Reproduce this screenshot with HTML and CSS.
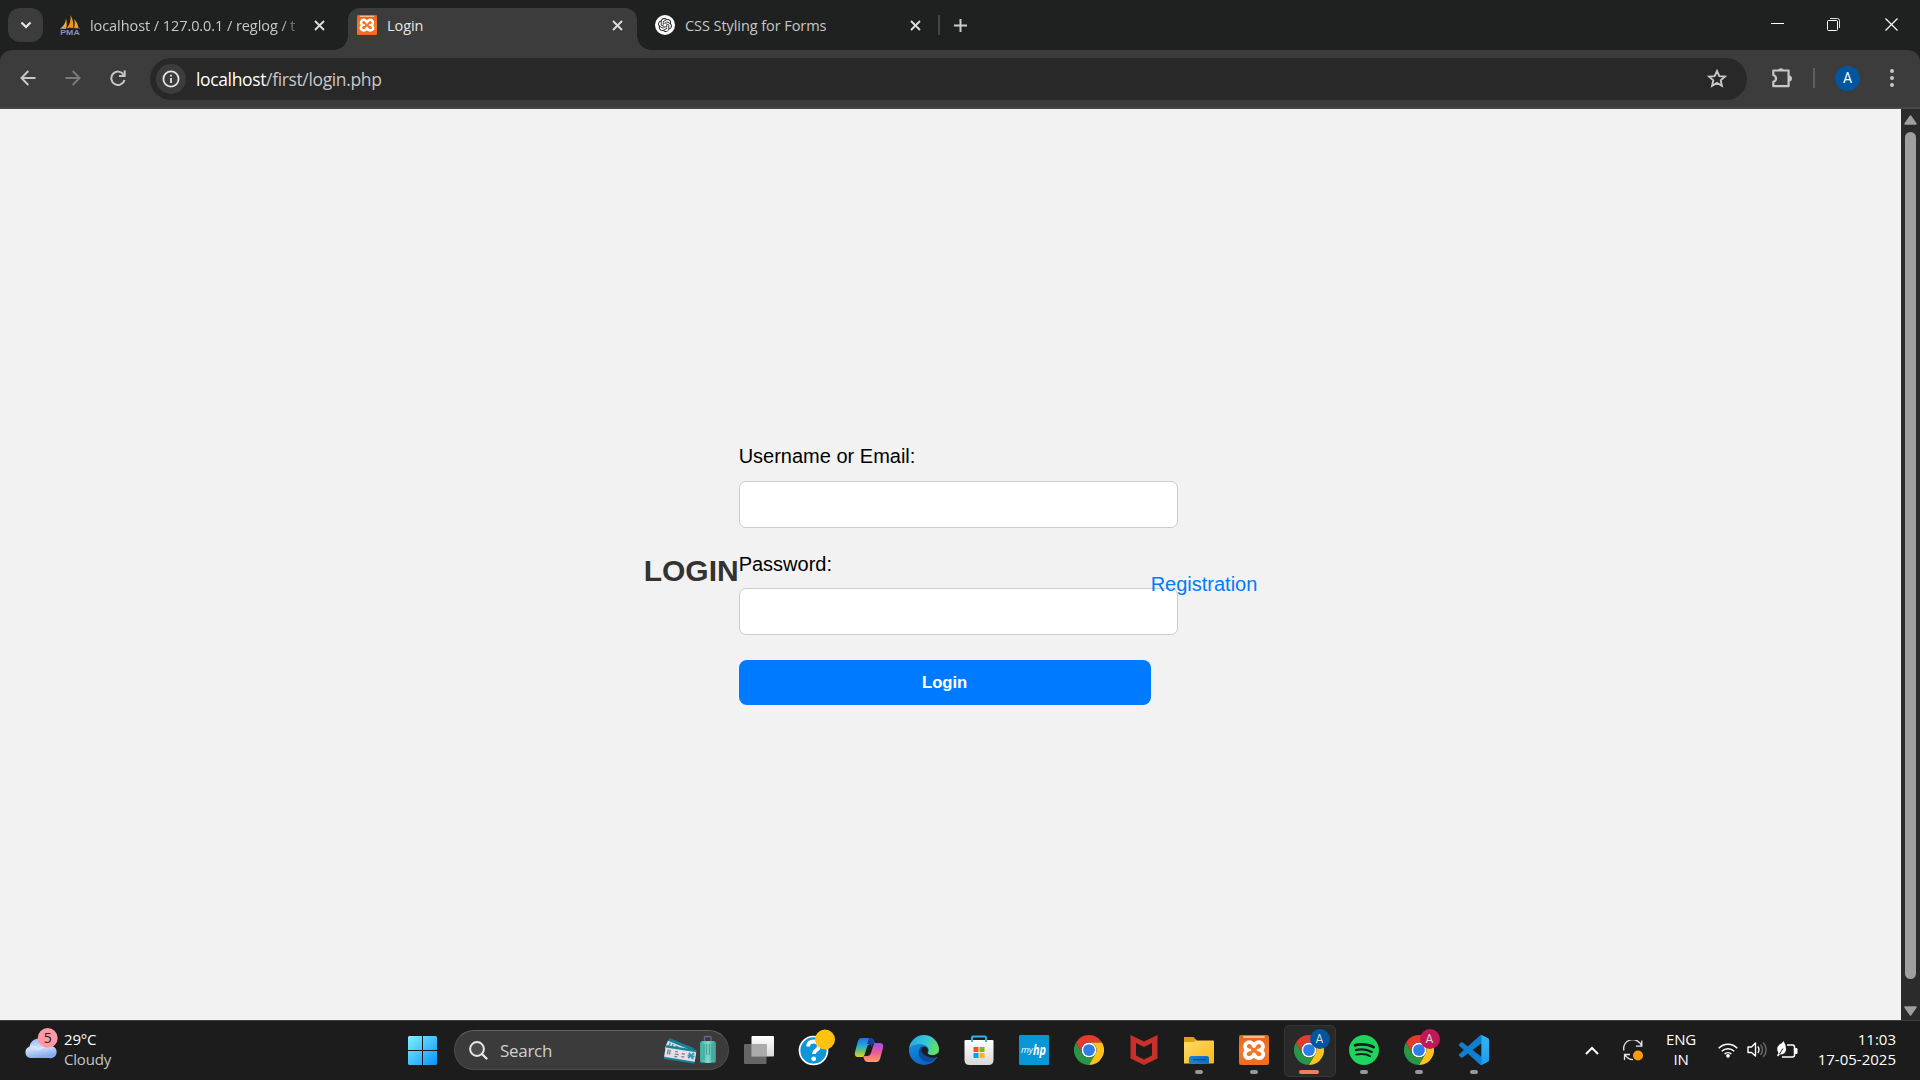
FILE: index.html
```html
<!DOCTYPE html>
<html lang="en">
<head>
<meta charset="utf-8">
<title>Login</title>
<link rel="stylesheet" href="styles.css">
</head>
<body>
<svg class="defs" width="0" height="0" aria-hidden="true">
  <defs>
    <linearGradient id="win" x1="0" y1="0" x2="1" y2="1"><stop offset="0" stop-color="#7df3ff"/><stop offset="1" stop-color="#0a90fa"/></linearGradient>
    <linearGradient id="folder" x1="0" y1="0" x2="1" y2="1"><stop offset="0" stop-color="#ffdc6b"/><stop offset="1" stop-color="#fbb615"/></linearGradient>
    <linearGradient id="bluebar" x1="0" y1="0" x2="1" y2="0"><stop offset="0" stop-color="#1388dc"/><stop offset="1" stop-color="#0c6cc0"/></linearGradient>
    <linearGradient id="cloud" x1="0" y1="0" x2="0.3" y2="1"><stop offset="0" stop-color="#8fb4f0"/><stop offset=".55" stop-color="#cfe0fb"/><stop offset="1" stop-color="#86aaea"/></linearGradient>
    <linearGradient id="sail" x1="0" y1="0" x2="1" y2="0"><stop offset="0" stop-color="#fbc888"/><stop offset=".5" stop-color="#f4900c"/><stop offset="1" stop-color="#f9a63a"/></linearGradient>
    <linearGradient id="xampp-bg" x1="0" y1="0" x2="0" y2="1"><stop offset="0" stop-color="#e0641c"/><stop offset=".5" stop-color="#f47a28"/><stop offset="1" stop-color="#ee6a20"/></linearGradient>
    <linearGradient id="edge-top" x1="0" y1=".3" x2="1" y2=".6"><stop offset="0" stop-color="#2aa8e0"/><stop offset=".5" stop-color="#33c6d6"/><stop offset="1" stop-color="#6be253"/></linearGradient>
    <linearGradient id="edge-left" x1="0" y1="0" x2=".4" y2="1"><stop offset="0" stop-color="#1b9de2"/><stop offset="1" stop-color="#0a66c8"/></linearGradient>
    <linearGradient id="cop-l" x1="0" y1="0" x2="0" y2="1"><stop offset="0" stop-color="#2270e0"/><stop offset=".4" stop-color="#22a8dc"/><stop offset=".7" stop-color="#6cc46a"/><stop offset="1" stop-color="#f0d020"/></linearGradient>
    <linearGradient id="cop-r" x1="0" y1="0" x2="0" y2="1"><stop offset="0" stop-color="#a04cf0"/><stop offset=".5" stop-color="#ee5a9a"/><stop offset="1" stop-color="#ffa060"/></linearGradient>
    <linearGradient id="bag" x1="0" y1="0" x2="0" y2="1"><stop offset="0" stop-color="#ffffff"/><stop offset="1" stop-color="#d8d8d8"/></linearGradient>
    <linearGradient id="case" x1="0" y1="0" x2="1" y2="0"><stop offset="0" stop-color="#3fa79c"/><stop offset=".5" stop-color="#7fdccb"/><stop offset="1" stop-color="#2f9a92"/></linearGradient>
    <linearGradient id="code" x1="0" y1="0" x2="0" y2="1"><stop offset="0" stop-color="#32b5f5"/><stop offset="1" stop-color="#1f9cf0"/></linearGradient>
    <symbol id="chrome" viewBox="0 0 48 48">
      <circle cx="24" cy="24" r="12" fill="#fff"/>
      <path fill="#e33b2e" d="M24 12H44.784A23.994 23.994 0 0 0 3.2155 12.003L13.608 30.003A11.985 11.985 0 0 1 24 12Z"/>
      <path fill="#2a9447" d="M13.608 30.003L3.2156 12.002A23.994 23.994 0 0 0 24.0025 48L34.395 30.003A11.985 11.985 0 0 1 13.608 30.003Z"/>
      <path fill="#fcc31e" d="M34.395 30.003L24.0025 48A23.994 23.994 0 0 0 44.7858 12.003H24A11.985 11.985 0 0 1 34.395 30.003Z"/>
      <circle cx="24" cy="24" r="9.4" fill="#2f7de9"/>
    </symbol>
    <symbol id="xampp" viewBox="0 0 30 30">
      <rect width="30" height="30" rx="2" fill="url(#xampp-bg)"/>
      <rect x="4" y="1" width="22" height="2" rx="1" fill="#f9b78c"/>
      <path fill="none" stroke="#fff" stroke-width="3.8" stroke-linejoin="round" d="M15 11C13.500 7 9.500 6.300 7.300 8.300C5.200 10.400 5.500 13.400 8.500 15C5.200 16.800 5 20.200 7 22C9.300 24 13.500 23.200 15 19.500C16.500 23.200 20.700 24 23 22C25 20.200 24.800 16.800 21.500 15C24.500 13.400 24.800 10.400 22.700 8.300C20.500 6.300 16.500 7 15 11Z"/>
      <path stroke="#fff" stroke-width="2.600" stroke-linecap="round" d="M8.500 15h2.500M19 15h2.500"/>
    </symbol>
    <symbol id="x" viewBox="0 0 11 11"><path d="M1 1L10 10M10 1L1 10" fill="none" stroke="currentColor" stroke-width="1.9"/></symbol>
  </defs>
</svg>

<header class="tabstrip">
  <button class="tab-search"><svg width="12" height="8" viewBox="0 0 12 8"><path d="M1.500 1.500L6 6L10.500 1.500" fill="none" stroke="#e8e8e8" stroke-width="2.200"/></svg></button>
  <div class="tab tab-first">
    <svg class="sails" width="20" height="20" viewBox="0 0 20 20"><path fill="url(#sail)" d="M0 14C4 11 6 7 6 3C7 8 7 11 6 14ZM7 13C10 9 11 5 10.500 0C13 5 14 9 13 13ZM14 13C15 9 15 7 14 4C17 7 18 10 18.500 13Z"/><path d="M0 13.700Q10 11.500 20 13.500" fill="none" stroke="#6a6d96" stroke-width=".7"/><text class="pma" x=".3" y="19.600" textLength="19.400" lengthAdjust="spacingAndGlyphs">PMA</text></svg>
    <span class="tab-title fade">localhost / 127.0.0.1 / reglog / t</span>
    <svg class="close" width="11" height="11"><use href="#x"/></svg>
  </div>
  <div class="tab active">
    <svg width="20" height="20"><use href="#xampp"/></svg>
    <span class="tab-title">Login</span>
    <svg class="close" width="11" height="11"><use href="#x"/></svg>
  </div>
  <div class="tab tab-last">
    <svg width="20" height="20" viewBox="0 0 20 20"><circle cx="10" cy="10" r="10" fill="#fff"/><path transform="translate(3 3) scale(.583)" fill="#222" d="M22.2819 9.8211a5.9847 5.9847 0 0 0-.5157-4.9108 6.0462 6.0462 0 0 0-6.5098-2.9A6.0651 6.0651 0 0 0 4.9807 4.1818a5.9847 5.9847 0 0 0-3.9977 2.9 6.0462 6.0462 0 0 0 .7427 7.0966 5.98 5.98 0 0 0 .511 4.9107 6.051 6.051 0 0 0 6.5146 2.9001A5.9847 5.9847 0 0 0 13.2599 24a6.0557 6.0557 0 0 0 5.7718-4.2058 5.9894 5.9894 0 0 0 3.9977-2.9001 6.0557 6.0557 0 0 0-.7475-7.0729zm-9.022 12.6081a4.4755 4.4755 0 0 1-2.8764-1.0408l.1419-.0804 4.7783-2.7582a.7948.7948 0 0 0 .3927-.6813v-6.7369l2.02 1.1686a.071.071 0 0 1 .038.052v5.5826a4.504 4.504 0 0 1-4.4945 4.4944zm-9.6607-4.1254a4.4708 4.4708 0 0 1-.5346-3.0137l.142.0852 4.783 2.7582a.7712.7712 0 0 0 .7806 0l5.8428-3.3685v2.3324a.0804.0804 0 0 1-.0332.0615L9.74 19.9502a4.4992 4.4992 0 0 1-6.1408-1.6464zM2.3408 7.8956a4.485 4.485 0 0 1 2.3655-1.9728V11.6a.7664.7664 0 0 0 .3879.6765l5.8144 3.3543-2.0201 1.1685a.0757.0757 0 0 1-.071 0l-4.8303-2.7865A4.504 4.504 0 0 1 2.3408 7.872zm16.5963 3.8558L13.1038 8.364 15.1192 7.2a.0757.0757 0 0 1 .071 0l4.8303 2.7913a4.4944 4.4944 0 0 1-.6765 8.1042v-5.6772a.79.79 0 0 0-.407-.667zm2.0107-3.0231l-.142-.0852-4.7735-2.7818a.7759.7759 0 0 0-.7854 0L9.409 9.2297V6.8974a.0662.0662 0 0 1 .0284-.0615l4.8303-2.7866a4.4992 4.4992 0 0 1 6.6802 4.66zM8.3065 12.863l-2.02-1.1638a.0804.0804 0 0 1-.038-.0567V6.0742a4.4992 4.4992 0 0 1 7.3757-3.4537l-.142.0805L8.704 5.459a.7948.7948 0 0 0-.3927.6813zm1.0976-2.3654l2.602-1.4998 2.6069 1.4998v2.9994l-2.5974 1.4997-2.6067-1.4997Z"/></svg>
    <span class="tab-title title-css">CSS Styling for Forms</span>
    <svg class="close" width="11" height="11"><use href="#x"/></svg>
  </div>
  <span class="tab-divider"></span>
  <svg class="new-tab" width="13" height="13" viewBox="0 0 13 13"><path d="M6.500 0V13M0 6.500H13" stroke="#ccc" stroke-width="2"/></svg>
  <div class="window-controls">
    <svg width="13" height="13" viewBox="0 0 13 13"><path d="M0 5.500H13" stroke="#fff"/></svg>
    <svg width="13" height="13" viewBox="0 0 13 13"><rect x=".5" y="2.500" width="10" height="10" rx="1" fill="none" stroke="#fff"/><path d="M3 .5H10.500Q12.500 .5 12.500 2.500V10" fill="none" stroke="#ddd"/></svg>
    <svg width="13" height="13" viewBox="0 0 13 13"><path d="M.5 .5L12.500 12.500M12.500 .5L.5 12.500" stroke="#fff" stroke-width="1.200"/></svg>
  </div>
</header>

<nav class="toolbar-back"><div class="toolbar">
  <div class="nav-buttons">
    <svg width="16" height="16" viewBox="0 0 16 16"><path d="M15.500 8H1.800M8.300 1L1.500 8L8.300 15" fill="none" stroke="#c7c7c7" stroke-width="2"/></svg>
    <svg width="16" height="16" viewBox="0 0 16 16"><path d="M.5 8H14.200M7.700 1L14.500 8L7.700 15" fill="none" stroke="#7b7b7b" stroke-width="2"/></svg>
    <svg width="16" height="16" viewBox="0 0 16 16"><path d="M13.600 4.600A6.700 6.700 0 1 0 14.500 10" fill="none" stroke="#c7c7c7" stroke-width="2"/><path d="M14.700 .4V6H9" fill="none" stroke="#c7c7c7" stroke-width="2"/></svg>
  </div>
  <div class="omnibox">
    <span class="site-info"><svg width="18" height="18" viewBox="0 0 18 18"><circle cx="9" cy="9" r="7.600" fill="none" stroke="#e3e3e3" stroke-width="1.800"/><path d="M9 8V13M9 4.800V6.600" stroke="#e3e3e3" stroke-width="1.800"/></svg></span>
    <span class="url"><b>localhost</b>/first/login.php</span>
    <svg class="star" width="20" height="19" viewBox="0 0 20 19"><path d="M10 2L12.300 7.100L17.900 7.600L13.700 11.300L14.900 16.800L10 13.900L5.100 16.800L6.300 11.300L2.100 7.600L7.700 7.100Z" fill="none" stroke="#c7c7c7" stroke-width="1.900"/></svg>
  </div>
  <svg class="puzzle" width="22" height="22" viewBox="0 0 22 22"><path d="M2.300 3.500H17.600V19.200H2.300V14.800Q5 14 5 11.400Q5 8.900 2.300 8Z" fill="none" stroke="#c7c7c7" stroke-width="2.200" stroke-linejoin="round"/><path d="M7 3.500A3 3 0 0 1 12.800 3.500ZM18 8.500A3 3 0 0 1 18 14.500Z" fill="#c7c7c7"/></svg>
  <span class="toolbar-divider"></span>
  <span class="avatar">A</span>
  <svg class="menu" width="4" height="18" viewBox="0 0 4 18"><g fill="#c7c7c7"><circle cx="2" cy="2" r="2"/><circle cx="2" cy="9" r="2"/><circle cx="2" cy="16" r="2"/></g></svg>
</div></nav>

<div class="viewport">
  <main class="page">
    <h2>LOGIN</h2>
    <form>
      <label for="user">Username or Email:</label>
      <input type="text" id="user">
      <label for="pass">Password:</label>
      <input type="password" id="pass">
      <button type="button" class="submit">Login</button>
    </form>
    <p class="register"><a href="#">Registration</a></p>
  </main>
  <div class="scrollbar">
    <svg width="13" height="10" viewBox="0 0 13 10"><path d="M6.500 1.300L11.700 8.800H1.300Z" fill="#9f9f9f" stroke="#9f9f9f" stroke-width="2" stroke-linejoin="round"/></svg>
    <span class="thumb"></span>
    <svg width="13" height="10" viewBox="0 0 13 10"><path d="M6.500 8.700L11.700 1.200H1.300Z" fill="#9f9f9f" stroke="#9f9f9f" stroke-width="2" stroke-linejoin="round"/></svg>
  </div>
</div>

<footer class="taskbar">
  <div class="weather">
    <svg width="35" height="32" viewBox="0 0 35 32"><path fill="url(#cloud)" d="M6 30A6 6 0 0 1 5.500 18.500A10 10 0 0 1 23 14Q26 16 28 18A6 6 0 0 1 25 30Z"/><path d="M6 18.500Q11 17 14 22M14 22Q20 17 27 20" fill="none" stroke="#e8f0ff" stroke-width="1.200" opacity=".7"/><circle cx="23.700" cy="10" r="10" fill="#ff99a4"/><text class="badge-text" x="23.700" y="15.200" text-anchor="middle">5</text></svg>
    <div class="two-line"><span>29°C</span><span class="dim">Cloudy</span></div>
  </div>
  <svg class="start" width="29" height="29" viewBox="0 0 29 29"><path fill="url(#win)" d="M1 0H14V14H0V1ZM15 0H28L29 1V14H15ZM0 15H14V29H1L0 28ZM15 15H29V28L28 29H15Z"/></svg>
  <div class="search">
    <svg width="19" height="19" viewBox="0 0 19 19"><circle cx="8" cy="8" r="6.900" fill="#4b4b4b" stroke="#e6e6e6" stroke-width="2"/><path d="M13 13L17.500 17.500" stroke="#e6e6e6" stroke-width="2.400" stroke-linecap="round"/></svg>
    <span>Search</span>
    <svg class="travel" width="53" height="30" viewBox="0 0 53 30"><g transform="translate(5 3) rotate(22)"><rect width="27" height="12" rx="1" fill="#1a7f94"/><rect y="3" width="26" height="8" fill="#cfe0e6"/><path d="M3 4v5M6 4v4M9 5h3M9 7h6" stroke="#65788c" stroke-width="1.200"/></g><g transform="translate(2 10) rotate(9)"><rect width="31" height="14" rx="1" fill="#14849a"/><rect y="2.500" width="31" height="9.500" fill="#e6dfe4"/><path d="M3 4v5M5 4v5M10 5h3M10 7.500h4M10 10h3M17 6h3M17 9h3" stroke="#77718f" stroke-width="1.200"/><path d="M24 4l5 6M29 3.500l-5 6M23 7h7" stroke="#3a96b8" stroke-width="1.800"/></g><path d="M40.500 6V2.500Q40.500 1.500 42 1.500H45.500Q47 1.500 47 2.500V6" fill="none" stroke="#69688f" stroke-width="1.300"/><rect x="36" y="6" width="16" height="22" rx="2.500" fill="url(#case)"/><path d="M40 9V25M42.700 9V20M45.300 9V20M48 9V25" stroke="#2f8f88" stroke-width=".8"/><path d="M38 28h3M47 28h3" stroke="#347" stroke-width="1"/></svg>
  </div>
  <div class="apps">
    <span class="app"><svg width="30" height="30" viewBox="0 0 30 30"><rect x="7.500" y="1" width="22.500" height="20.500" rx="1" fill="url(#bag)"/><rect y="9" width="22.500" height="20" rx="1" fill="#737373" opacity=".85"/><rect x="7.500" y="9" width="15" height="12.500" fill="#aaa"/></svg></span>
    <span class="app"><svg class="wide" width="38" height="38" viewBox="0 0 38 38"><circle cx="18.500" cy="20.500" r="14" fill="#0f96d8" stroke="#fff" stroke-width="1.700"/><path d="M13 16.500Q13.500 11.500 18.500 11.500T24 16Q24 18.500 21 20.500Q18.800 22 18.800 24" fill="none" stroke="#fff" stroke-width="3.800"/><circle cx="18.700" cy="28.800" r="2.400" fill="#fff"/><circle cx="30" cy="9.500" r="10" fill="#ffc20e"/></svg></span>
    <span class="app"><svg width="30" height="30" viewBox="0 0 30 30"><path fill="url(#cop-l)" d="M7 3H16Q19 3 20 6L21 9H17Q14 9 13 12L10.500 20Q9.800 22 8 22H4Q0 22 1 17L4 6Q5 3 7 3Z"/><path fill="url(#cop-r)" d="M23 27H14Q11 27 10 24L9 21H13Q16 21 17 18L19.500 10Q20.200 8 22 8H26Q30 8 29 13L26 24Q25 27 23 27Z"/><path fill="#173f9e" d="M15 3H16.500Q19 3 20 6L20.600 8Q18 9 17 12L16.500 9H13Z"/></svg></span>
    <span class="app"><svg width="30" height="30" viewBox="0 0 30 30"><circle cx="15" cy="15" r="15" fill="url(#edge-left)"/><path fill="#0c4a9a" d="M11.500 12Q8 17 11 22.500Q15 28.500 23 26Q26 24.500 28 21Q24 23 20 21.500Q15.500 20 15 15Q15 11 12 11.500Z"/><path fill="url(#edge-top)" d="M.2 13A15 15 0 0 1 30 14.500Q29.500 20 23.500 20.200Q19 20.200 18.500 18Q21 16 19 12.500Q16 9 11 9Q4 9 .2 13Z"/><path fill="#1c1c1c" d="M15.300 11.300Q20.500 13 18.500 17.500Q18.800 20.400 24.500 20.200Q27 20 29 18L30.500 19V22H27.500Q24 23.400 20 22Q14 20 12.500 16Q12 12.500 15.300 11.300Z"/></svg></span>
    <span class="app"><svg width="30" height="30" viewBox="0 0 30 30"><path d="M8 6V2.500Q8 1.500 9 1.500H21Q22 1.500 22 2.500V6" fill="none" stroke="#2fb4ea" stroke-width="1.900"/><path fill="url(#bag)" d="M.5 6Q.5 5 1.500 5H28.500Q29.500 5 29.500 6V25Q29.500 30 24.500 30H5.500Q.5 30 .5 25Z"/><path d="M8 5V7M22 5V7" stroke="#2fb4ea" stroke-width="1.900"/><path fill="#f1511b" d="M9.500 12h5v5h-5z"/><path fill="#80bb0a" d="M15.500 12h5v5h-5z"/><path fill="#00a1f1" d="M9.500 18h5v5h-5z"/><path fill="#fbb900" d="M15.500 18h5v5h-5z"/></svg></span>
    <span class="app"><svg width="30" height="30" viewBox="0 0 30 30"><rect width="30" height="30" rx="1" fill="#0796d6"/><text class="my" x="2" y="18" textLength="12" lengthAdjust="spacingAndGlyphs">my</text><text class="hp" x="14" y="19.500" textLength="13" lengthAdjust="spacingAndGlyphs">hp</text></svg></span>
    <span class="app"><svg width="30" height="30"><use href="#chrome"/></svg></span>
    <span class="app"><svg width="30" height="30" viewBox="0 0 30 30"><path fill="#c8302c" d="M1.500 0L15 6.500L28.500 0V23.500L15 30L1.500 23.500ZM7 8V20.500L15 24.500L23 20.500V8L15 12Z"/></svg></span>
    <span class="app running"><svg width="30" height="30" viewBox="0 0 30 30"><path fill="#e0a106" d="M0 2H9.500L13 5.500L10 9H0Z"/><path fill="url(#folder)" d="M0 7H9Q10.500 7 11.500 5.500H29Q30 5.500 30 6.500V27.500Q30 28.500 29 28.500H0Z"/><path fill="url(#bluebar)" d="M5 28.500V23.500Q5 21 7.500 21H22.500Q25 21 25 23.500V28.500Z"/><path d="M9 24.600H21.500" stroke="#0b4a91" stroke-width="1.300"/></svg></span>
    <span class="app running"><svg width="30" height="30"><use href="#xampp"/></svg></span>
    <span class="app current"><svg width="30" height="30"><use href="#chrome"/></svg><span class="profile blue">A</span></span>
    <span class="app running"><svg width="30" height="30" viewBox="0 0 24 24"><path fill="#1ed35e" d="M12 0C5.400 0 0 5.400 0 12s5.400 12 12 12 12-5.400 12-12S18.660 0 12 0zm5.521 17.340c-.24.359-.66.48-1.021.24-2.820-1.740-6.360-2.101-10.561-1.141-.418.122-.779-.179-.899-.539-.12-.421.18-.78.54-.9 4.560-1.021 8.520-.6 11.640 1.320.42.18.479.659.301 1.020zm1.440-3.300c-.301.42-.841.6-1.262.3-3.239-1.980-8.159-2.580-11.939-1.380-.479.12-1.020-.12-1.140-.6-.12-.48.12-1.021.6-1.141C9.600 9.900 15 10.561 18.720 12.840c.361.181.54.78.241 1.200zm.12-3.360C15.240 8.400 8.820 8.160 5.160 9.301c-.6.179-1.200-.181-1.380-.721-.18-.601.18-1.200.72-1.381 4.260-1.260 11.280-1.020 15.721 1.621.539.3.719 1.020.419 1.560-.299.421-1.020.599-1.559.3z"/></svg></span>
    <span class="app running"><svg width="30" height="30"><use href="#chrome"/></svg><span class="profile pink">A</span></span>
    <span class="app running"><svg width="30" height="30" viewBox="0 0 24 24"><path fill="#0e80cf" d="M23.150 2.587L18.210.21a1.494 1.494 0 0 0-1.705.29l-9.460 8.630-4.120-3.128a.999.999 0 0 0-1.276.057L.327 7.261A1 1 0 0 0 .326 8.740L3.899 12 .326 15.260a1 1 0 0 0 .001 1.479L1.650 17.940a.999.999 0 0 0 1.276.057l4.120-3.128 9.460 8.630a1.492 1.492 0 0 0 1.704.29l4.942-2.377A1.500 1.500 0 0 0 24 20.060V3.939a1.500 1.500 0 0 0-.85-1.352zm-5.146 14.861L10.826 12l7.178-5.448v10.896z"/><path fill="url(#code)" d="M18 1.200Q18 .3 17.300 0L18.200.2L23.150 2.587Q24 3 24 3.940V20.060Q24 21 23.150 21.400L18.200 23.800L17.300 24Q18 23.600 18 22.800Z"/></svg></span>
  </div>
  <div class="tray">
    <svg width="14" height="9" viewBox="0 0 14 9"><path d="M1 8L7 2L13 8" fill="none" stroke="#fff" stroke-width="2"/></svg>
    <svg class="sync" width="21" height="21" viewBox="0 0 21 21"><path d="M1 10.500A9 8.500 0 0 1 18.500 6M18.800 .5V6.200H13M10 19.700Q5 19.500 2 14.800M1.500 20V14.500H7" fill="none" stroke="#e6e6e6" stroke-width="1.300"/><circle cx="15" cy="15.500" r="5" fill="#ff9a0c"/></svg>
    <div class="two-line lang"><span>ENG</span><span>IN</span></div>
    <svg class="wifi" width="20" height="16" viewBox="0 0 20 16"><g fill="none" stroke="#fff" stroke-width="1.500"><path d="M.7 6.300A12.600 12.600 0 0 1 19.300 6.300"/><path d="M3.800 9.300A8.600 8.600 0 0 1 16.200 9.300"/><path d="M6.600 12A5 5 0 0 1 13.400 12"/></g><circle cx="10" cy="13.800" r="1.900" fill="#fff"/></svg>
    <svg class="speaker" width="21" height="18" viewBox="0 0 21 18"><path d="M1 6H4.500L8.500 2V15L4.500 11.500H1Z" fill="none" stroke="#fff" stroke-width="1.400" stroke-linejoin="round"/><path d="M10.800 5.500Q13.300 8.800 10.800 12" fill="none" stroke="#fff" stroke-width="1.300"/><path d="M13.500 3.500Q17.500 8.800 13.500 14M16.300 1.500Q22 8.800 16.300 16" fill="none" stroke="#686868" stroke-width="1.400"/></svg>
    <svg class="battery" width="21" height="18" viewBox="0 0 21 18"><path d="M10 4H15.500Q17.500 4 17.500 6V14Q17.500 16 15.500 16H5" fill="none" stroke="#fff" stroke-width="1.500"/><path d="M18.500 7.500H20V12.500H18.500Z" fill="#fff" stroke="#fff"/><path fill="#fff" d="M6.500 0Q5.500 2 2.500 3.500Q-1.500 7 1.500 12L0 14.500L1 15.500L3 13.300Q8 14 9 9Q9.300 4 6.500 0Z"/><path d="M2.500 13L6 7.500" stroke="#1c1c1c"/></svg>
    <div class="two-line clock"><span>11:03</span><span>17-05-2025</span></div>
  </div>
</footer>
</body>
</html>
```
FILE: styles.css
```css
* { box-sizing: border-box; }
body {
  margin: 0;
  width: 1920px;
  height: 1080px;
  overflow: hidden;
  display: flex;
  flex-direction: column;
  font-family: "Segoe UI", "Open Sans", "Noto Sans", sans-serif;
  background: #1f2120;
}
svg { display: block; flex: none; }
.defs { position: absolute; }

/* Tab strip */
.tabstrip { display: flex; height: 50px; padding-left: 8px; background: #1f2120; }
.tab-search {
  width: 35px; height: 34px; margin-top: 8px; padding: 0;
  border: 0; border-radius: 12px; background: #3c3c3c;
  display: flex; align-items: center; justify-content: center;
}
.tab { display: flex; align-items: center; height: 34px; margin-top: 8px; color: #c7c7c7; }
.tab-first { width: 305px; padding: 0 23px 0 17px; }
.tab-last { width: 301px; padding: 0 17px 0 18px; }
.active {
  position: relative; width: 289px; height: 42px; padding: 0 14px 8px 9px;
  border-radius: 12px 12px 0 0; background: #3c3c3c; color: #e6e6e6;
}
.active::before, .active::after {
  content: ""; position: absolute; bottom: 0; width: 14px; height: 14px;
}
.active::before { left: -14px; background: radial-gradient(circle at 0 0, transparent 13.500px, #3c3c3c 14px); }
.active::after { right: -14px; background: radial-gradient(circle at 100% 0, transparent 13.500px, #3c3c3c 14px); }
.tab-title { flex: 1; margin-left: 10px; padding-top: 2px; font-size: 14.500px; line-height: 20px; white-space: nowrap; letter-spacing: -.07px; }
.fade { flex: none; width: 211px; -webkit-mask-image: linear-gradient(90deg, #000 190px, transparent 214px); mask-image: linear-gradient(90deg, #000 190px, transparent 214px); }
.close { margin-left: auto; color: #dcdcdc; }
.sails, .wide { overflow: visible; }
.pma { font: bold 8px "Liberation Sans", sans-serif; fill: #8a8db6; }
.tab-divider { width: 2px; height: 20px; margin-top: 15px; background: #434443; }
.new-tab { margin: 19px 0 0 14px; }
.window-controls { display: flex; gap: 44px; margin: 18px 22px 0 auto; }
.window-controls svg:first-child { margin-right: -1px; }
.window-controls svg:nth-child(-n+2) { position: relative; left: -1px; }

/* Toolbar */
.toolbar-back { background: #1f2120; }
.toolbar {
  display: flex; align-items: center; height: 59px; padding: 0 26px 1px 20px;
  background: #3c3c3c; border-bottom: 2px solid #484848; border-radius: 12px 12px 0 0;
}
.nav-buttons { display: flex; gap: 29px; width: 130px; }
.omnibox {
  display: flex; align-items: center; width: 1597px; height: 42px; padding: 0 20px 0 6px;
  margin-top: 1px; border-radius: 21px; background: #282828; color: #c7c7c7;
}
.site-info { display: flex; align-items: center; justify-content: center; width: 30px; height: 30px; border-radius: 50%; background: #3c3c3c; }
.url { margin-left: 10px; padding-top: 1px; font-size: 17.500px; line-height: 24px; letter-spacing: -.36px; }
.url b { font-weight: 400; color: #fff; }
.star { margin-left: auto; }
.puzzle { margin-left: 24px; }
.toolbar-divider { width: 2px; height: 20px; margin-left: 20px; background: #5e5e5e; }
.avatar { width: 25px; height: 25px; margin-left: 20px; border-radius: 50%; background: #00569f; color: #fff; font: 14px/25px Roboto, sans-serif; text-align: center; }
.menu { margin-left: auto; }

/* Browser viewport */
.viewport { display: flex; height: 911px; }
.page {
  flex: 1; display: flex; justify-content: center; align-items: flex-start;
  padding-top: 336px; background: #f2f2f2; font: 20px/23px "Liberation Sans", Arial, sans-serif; color: #000;
}
h2 { margin: 109px 0 0; font-size: 30px; line-height: 34px; color: #333; }
form { width: 412px; display: flex; flex-direction: column; align-items: flex-start; }
form input { width: 439px; height: 47px; margin: 13px -27px 25px 0; border: 1px solid #ccc; border-radius: 7px; background: #fff; }
#pass { margin: 12px -27px 25px 0; }
form label { height: 23px; }
.submit { width: 412px; height: 45px; border: 0; border-radius: 8px; background: #007bff; color: #fff; font: bold 16.670px "Liberation Sans", Arial, sans-serif; }
.register { position: relative; margin: 128px 0 0; }
.register a { color: #007bff; text-decoration: none; }
.scrollbar { display: flex; flex-direction: column; align-items: center; width: 19px; padding: 6px 0 4px; background: #2b2b2b; }
.thumb { width: 11px; height: 847px; margin: 7px 0 auto; border-radius: 6px; background: #9f9f9f; }

/* Taskbar */
.taskbar { display: flex; align-items: center; height: 60px; padding-bottom: 1px; background: #1c1c1c; border-top: 1px solid #3c4040; color: #fff; }
.weather { display: flex; width: 408px; padding-left: 24px; }
.weather svg { margin-top: -1px; }
.weather .two-line { margin-left: 5px; }
.two-line { display: flex; flex-direction: column; padding-bottom: 2px; font-size: 15px; line-height: 20px; letter-spacing: -.2px; }
.dim { color: #c4c4c4; }
.badge-text { font-size: 14px; fill: #222; }
.search {
  display: flex; align-items: center; width: 275px; height: 40px; margin-left: 17px; padding: 0 11px 0 14px;
  border: 1px solid #4c4c4c; border-top-color: #626262; border-radius: 20px; background: #3b3b3b; color: #d0d0d0; font-size: 17px;
}
.search span { margin-left: 12px; padding-top: 1px; letter-spacing: -.3px; }
.travel { margin-left: auto; }
.apps { display: flex; margin-left: 2px; }
.app { position: relative; display: flex; align-items: center; justify-content: center; width: 55px; height: 50px; }
.wide { margin-bottom: 2px; }
.running::after, .current::after { content: ""; position: absolute; bottom: 1px; left: 23.500px; width: 8px; height: 4px; border-radius: 2px; background: #989898; }
.current::before { content: ""; position: absolute; left: 2.500px; top: 0; width: 50px; height: 50px; border: 1px solid #363636; border-radius: 5px; background: #292929; }
.current svg { position: relative; }
.current::after { left: 17.500px; width: 20px; background: #f47c62; }
.profile { position: absolute; left: 28.500px; top: 4px; width: 20px; height: 20px; border-radius: 50%; font: 12px/20px Roboto, sans-serif; text-align: center; color: #ddd; }
.blue { background: #00569f; }
.pink { background: #c2185b; }
.my { font: italic 9px "Open Sans", sans-serif; fill: #fff; }
.hp { font: italic bold 14px "Open Sans", sans-serif; fill: #fff; }
.tray { display: flex; align-items: center; margin-left: auto; padding-right: 24px; }
.sync { margin-left: 24px; }
.lang { width: 40px; margin-left: 17px; align-items: center; }
.wifi { margin-left: 17px; }
.speaker { margin-left: 9px; }
.battery { margin-left: 9px; }
.clock { width: 98px; align-items: flex-end; letter-spacing: 0; }
```
